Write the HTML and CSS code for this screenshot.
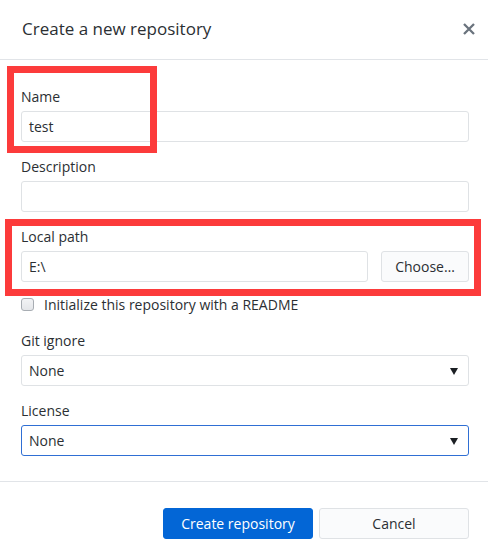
FILE: index.html
```html
<!DOCTYPE html>
<html>
<head>
<meta charset="utf-8">
<link rel="stylesheet" href="styles.css">
</head>
<body>
<div class="dialog">
  <header class="dlg-header">
    <h1 class="title">Create a new repository</h1>
    <button class="close" aria-label="Close">
      <svg width="12" height="12" viewBox="0 0 12 12"><path d="M1 1 L11 11 M11 1 L1 11" stroke="#6a737d" stroke-width="2.3" stroke-linecap="butt"/></svg>
    </button>
  </header>
  <main class="dlg-body">
    <div class="group">
      <label class="lbl">Name</label>
      <div class="input">test</div>
    </div>
    <div class="group">
      <label class="lbl">Description</label>
      <div class="input"></div>
    </div>
    <div class="group">
      <label class="lbl">Local path</label>
      <div class="path-row">
        <div class="input grow">E:\</div>
        <button class="btn choose">Choose…</button>
      </div>
    </div>
    <div class="check-row">
      <span class="checkbox"></span>
      <span class="check-label">Initialize this repository with a README</span>
    </div>
    <div class="group">
      <label class="lbl">Git ignore</label>
      <div class="input select">None<span class="arrow"></span></div>
    </div>
    <div class="group">
      <label class="lbl">License</label>
      <div class="input select focused">None<span class="arrow"></span></div>
    </div>
  </main>
  <footer class="dlg-footer">
    <button class="btn primary">Create repository</button>
    <button class="btn cancel">Cancel</button>
  </footer>
  <div class="mark mark-name"></div>
  <div class="mark mark-path"></div>
</div>
</body>
</html>
```
FILE: styles.css
```css
* { box-sizing: border-box; }
html, body { margin: 0; padding: 0; background: #fff; }
body {
  font-family: "Open Sans", "Noto Sans", sans-serif;
  font-size: 14px;
  color: #2b2f33;
}
.dialog { position: relative; width: 488px; height: 560px; }
.dlg-header {
  height: 60px;
  border-bottom: 1px solid #e1e4e8;
  display: flex;
  align-items: center;
  justify-content: space-between;
  padding: 0 13px 2px 22px;
}
.title {
  margin: 0;
  font-size: 17px;
  font-weight: 400;
  color: #2b2f33;
}
.close {
  border: 0;
  background: none;
  padding: 0;
  width: 12px;
  height: 12px;
  display: flex;
}
.dlg-body {
  padding: 28px 19px 25px 21px;
  display: flex;
  flex-direction: column;
  gap: 16px;
  border-bottom: 1px solid #e1e4e8;
}
.group { display: flex; flex-direction: column; gap: 5px; }
.lbl { line-height: 18px; height: 18px; }
.input {
  height: 31px;
  border: 1px solid #dfe2e5;
  border-radius: 3px;
  padding: 0 7px;
  line-height: 29px;
  background: #fff;
}
.path-row { display: flex; gap: 13px; }
.grow { flex: 1; }
.btn {
  font-family: inherit;
  font-size: 14px;
  height: 31px;
  border-radius: 3px;
  cursor: default;
}
.choose {
  width: 88px;
  background: #fafbfc;
  border: 1px solid #dfe2e5;
  color: #2b2f33;
  padding: 0;
}
.check-row {
  display: flex;
  align-items: center;
  gap: 10px;
  height: 18px;
  margin-top: -3px;
  margin-bottom: 3px;
}
.checkbox {
  width: 13px;
  height: 13px;
  border: 1px solid #a8adb3;
  border-radius: 3px;
  background: linear-gradient(#f2f3f5, #e4e6e9);
}
.select { position: relative; }
.arrow {
  position: absolute;
  right: 10px;
  top: 12px;
  width: 0;
  height: 0;
  border-left: 4px solid transparent;
  border-right: 4px solid transparent;
  border-top: 7px solid #1b1f23;
}
.focused { border-color: #2f6fd4; }
.dlg-footer {
  display: flex;
  justify-content: flex-end;
  gap: 6px;
  padding: 26px 19px 0 0;
}
.primary {
  width: 150px;
  background: #0366d6;
  border: 1px solid #0366d6;
  color: #fff;
  padding: 0;
}
.cancel {
  width: 150px;
  background: #fafbfc;
  border: 1px solid #dfe2e5;
  color: #2b2f33;
  padding: 0;
}
.mark {
  position: absolute;
  border: 7px solid #fc3b3b;
  pointer-events: none;
}
.mark-name { left: 7px; top: 66px; width: 150px; height: 87px; }
.mark-path { left: 5px; top: 219px; width: 476px; height: 77px; }
```
